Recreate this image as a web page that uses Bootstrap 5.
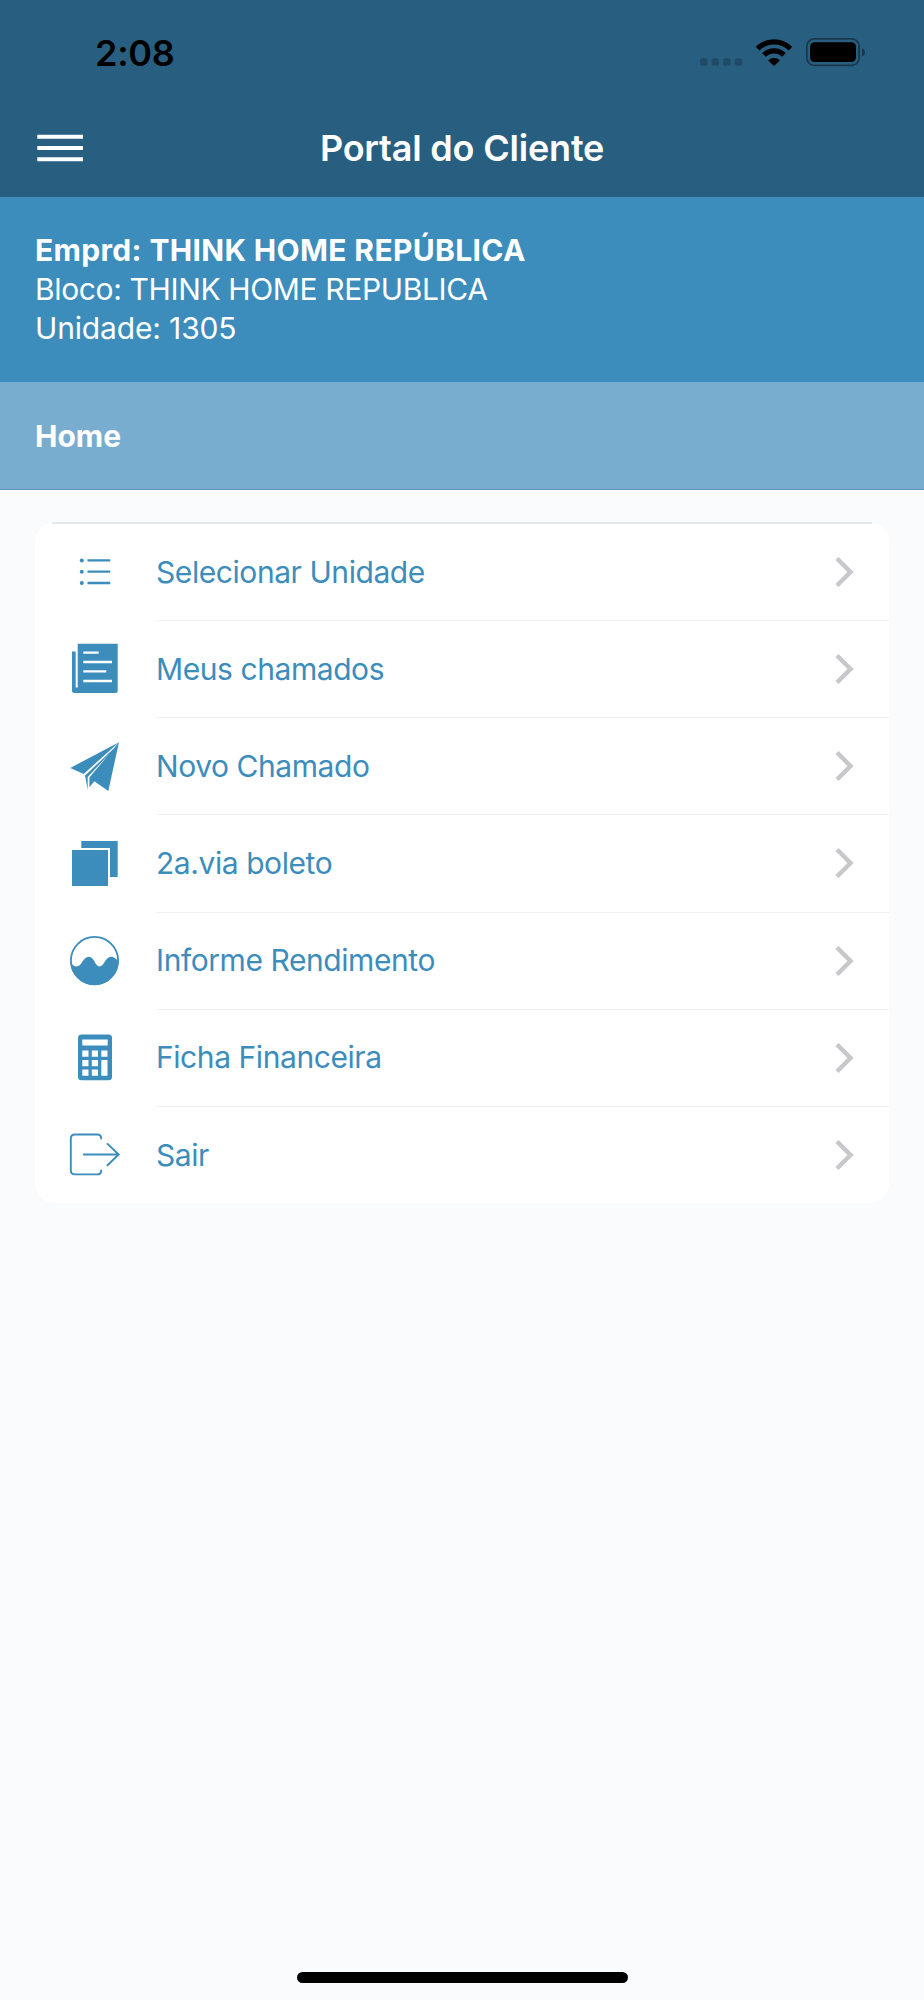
<!DOCTYPE html>
<html lang="pt-BR">
<head>
<meta charset="utf-8">
<meta name="viewport" content="width=device-width, initial-scale=1">
<title>Portal do Cliente</title>
<link href="https://cdn.jsdelivr.net/npm/bootstrap@5.3.0/dist/css/bootstrap.min.css" rel="stylesheet">
<style>
body{font-family:Inter,"Liberation Sans",sans-serif;background:#fafbfd;font-size:30px;line-height:39px;color:#fff}
svg{display:block;flex:none}
.app{height:2000px}
.app-header{background:#285f80;height:197px}
.status-bar{height:104px;padding:0 57px 0 95px}
.clock{font-size:36px;font-weight:600;color:#000;letter-spacing:-.3px;padding-top:2px}
.title-bar{height:88px;padding:0 37px}
.title-bar h1{font-size:36px;font-weight:600;letter-spacing:-.2px;padding-top:2px}
.unit-info{background:#3c8dbc;height:185px;padding:34px 35px 0}
.unit-name{letter-spacing:.34px}
.unit-block{letter-spacing:-.36px}
.unit-number{letter-spacing:-.15px}
.section-head{background:#78add0;height:108px;padding:2px 35px 0;border-bottom:1px solid #6095b7}
.menu{margin:32px 35px 0;border-radius:20px;background:#fff;overflow:hidden;width:854px}
.menu-line{height:2px;margin:0 17px;background:#e6e7e8}
.menu-row{height:97.2px;padding-left:29px;color:#3c8dbc;text-decoration:none;letter-spacing:-.43px}
.menu-line + .menu-row{height:96px}
.menu-row + .menu-row > svg{margin-top:1.6px}
.menu-text{margin-left:32px;padding-right:33px;height:100%}
.menu-row + .menu-row .menu-text{border-top:1px solid #f0f0f1}
.home-bar{width:331px;height:11px;border-radius:6px;background:#000;margin-bottom:17.500px}
</style>
</head>
<body>
<div class="app d-flex flex-column">
  <header class="app-header">
    <div class="status-bar d-flex align-items-center justify-content-between">
      <span class="clock">2:08</span>
      <svg width="169" height="32" viewBox="698 36 169 32">
        <g opacity=".2"><rect x="700" y="58.2" width="7.6" height="7.6" rx="2.6"/><rect x="711.6" y="58.2" width="7.6" height="7.6" rx="2.6"/><rect x="723" y="58.2" width="7.6" height="7.6" rx="2.6"/><rect x="734.6" y="58.2" width="7.6" height="7.6" rx="2.6"/></g>
        <g fill="none" stroke="#000" stroke-width="5.2"><path d="M757.6 48.6a23.3 23.3 0 0 1 32.8 0"/><path d="M764 55a14.2 14.2 0 0 1 20 0"/></g>
        <path d="M768.2 60.4a8.3 8.3 0 0 1 11.6 0L774 66z"/>
        <rect x="806.9" y="38.9" width="52.2" height="26.4" rx="7.4" fill="none" stroke="#000" stroke-width="1.8" opacity=".4"/>
        <rect x="810" y="42.3" width="46" height="19.7" rx="4.5"/>
        <path d="M862 48q3 1.200 3 4.200t-3 4.200z" opacity=".4"/>
      </svg>
    </div>
    <div class="title-bar d-flex align-items-center justify-content-between">
      <svg width="46" height="28" viewBox="0 0 46 28"><path d="M.3 2.700H46M.3 14H46M.3 25.300H46" stroke="#fff" stroke-width="4"/></svg>
      <h1 class="m-0">Portal do Cliente</h1>
      <svg width="46" height="28" aria-hidden="true"></svg>
    </div>
  </header>

  <section class="unit-info">
    <div class="unit-name fw-bold">Emprd: THINK HOME REPÚBLICA</div>
    <div class="unit-block">Bloco: THINK HOME REPUBLICA</div>
    <div class="unit-number">Unidade: 1305</div>
  </section>
  <div class="section-head d-flex align-items-center fw-bold">Home</div>

  <nav class="menu d-flex flex-column">
    <div class="menu-line"></div>
    <a class="menu-row d-flex align-items-center" href="#">
      <svg width="60" height="60" viewBox="0 0 60 60" fill="#3c8dbc"><circle cx="17.800" cy="18.400" r="2"/><circle cx="17.800" cy="29.700" r="2"/><circle cx="17.800" cy="41" r="2"/><path d="M23.500 18.400h22.800M23.500 29.700h22.800M23.500 41h22.800" stroke="#3c8dbc" stroke-width="2.300"/></svg>
      <span class="menu-text flex-fill d-flex align-items-center justify-content-between">Selecionar Unidade<svg width="22" height="32" viewBox="0 0 22 32"><path d="M3 2.500L16.500 16 3 29.500" fill="none" stroke="#c7c7cc" stroke-width="4.500"/></svg></span>
    </a>
    <a class="menu-row d-flex align-items-center" href="#">
      <svg width="60" height="60" viewBox="0 0 60 60" fill="#3c8dbc"><path d="M13.700 4.700h40V51.500q0 2.500-2.500 2.500H10.500Q8 54 8 51.500V12.400h3.700v36h2z"/><path d="M19.300 13.700h15.400M19.300 23H48M19.300 32.400h23M19.300 42H48" stroke="#fff" stroke-width="2.300"/></svg>
      <span class="menu-text flex-fill d-flex align-items-center justify-content-between">Meus chamados<svg width="22" height="32" viewBox="0 0 22 32"><path d="M3 2.500L16.500 16 3 29.500" fill="none" stroke="#c7c7cc" stroke-width="4.500"/></svg></span>
    </a>
    <a class="menu-row d-flex align-items-center" href="#">
      <svg width="60" height="60" viewBox="0 0 60 60" fill="#3c8dbc"><path d="M55 5.200L6.300 30.900l13.400 6zM53.500 8L21 38.500l2.700 14.400V40zM55 5.200L25.400 40.600v9.600l4.900-6 14 9.700z"/></svg>
      <span class="menu-text flex-fill d-flex align-items-center justify-content-between">Novo Chamado<svg width="22" height="32" viewBox="0 0 22 32"><path d="M3 2.500L16.500 16 3 29.500" fill="none" stroke="#c7c7cc" stroke-width="4.500"/></svg></span>
    </a>
    <a class="menu-row d-flex align-items-center" href="#">
      <svg width="60" height="60" viewBox="0 0 60 60" fill="#3c8dbc"><path d="M8 16h36v36H8zM17.300 7h36.400v36H46V14H17.300z"/></svg>
      <span class="menu-text flex-fill d-flex align-items-center justify-content-between">2a.via boleto<svg width="22" height="32" viewBox="0 0 22 32"><path d="M3 2.500L16.500 16 3 29.500" fill="none" stroke="#c7c7cc" stroke-width="4.500"/></svg></span>
    </a>
    <a class="menu-row d-flex align-items-center" href="#">
      <svg width="60" height="60" viewBox="0 0 60 60" fill="#3c8dbc"><circle cx="30.500" cy="29.500" r="23.600" fill="none" stroke="#3c8dbc" stroke-width="1.800"/><path d="M6.500 31C8 33.500 10 35.500 12.700 35.500c5 0 6.500-9.700 12-9.700s6.500 9.700 10.800 9.700c4.500 0 6-9.700 11.500-9.700 3.500 0 5 2.700 7.500 3.900a24 24 0 0 1-48 1.300z"/></svg>
      <span class="menu-text flex-fill d-flex align-items-center justify-content-between">Informe Rendimento<svg width="22" height="32" viewBox="0 0 22 32"><path d="M3 2.500L16.500 16 3 29.500" fill="none" stroke="#c7c7cc" stroke-width="4.500"/></svg></span>
    </a>
    <a class="menu-row d-flex align-items-center" href="#">
      <svg width="60" height="60" viewBox="0 0 60 60" fill="#3c8dbc"><rect x="14" y="6.600" width="34" height="45.700" rx="3.500"/><path fill="#fff" d="M18.300 11.600h25.400v5.900H18.300zM18.300 22.600h6.200v6.200h-6.200zM27.800 22.600H34v6.200h-6.200zM37.300 22.600h6.200v6.200h-6.200zM18.300 32h6.200v6.200h-6.200zM27.800 32H34v6.200h-6.200zM18.300 41.500h6.200v6.200h-6.200zM27.800 41.500H34v6.200h-6.200zM37.300 32h6.200v15.700h-6.200z"/></svg>
      <span class="menu-text flex-fill d-flex align-items-center justify-content-between">Ficha Financeira<svg width="22" height="32" viewBox="0 0 22 32"><path d="M3 2.500L16.500 16 3 29.500" fill="none" stroke="#c7c7cc" stroke-width="4.500"/></svg></span>
    </a>
    <a class="menu-row d-flex align-items-center" href="#">
      <svg width="60" height="60" viewBox="0 0 60 60" fill="none" stroke="#3c8dbc" stroke-width="1.900" stroke-linecap="round"><path d="M37.200 13.500q0-4-4-4H11q-4.200 0-4.200 4.200v31.500q0 4.200 4.200 4.200h22.200q4 0 4-4M19.800 29.500h35M43.500 18.900L54.700 29.500 43.500 40.300"/></svg>
      <span class="menu-text flex-fill d-flex align-items-center justify-content-between">Sair<svg width="22" height="32" viewBox="0 0 22 32"><path d="M3 2.500L16.500 16 3 29.500" fill="none" stroke="#c7c7cc" stroke-width="4.500"/></svg></span>
    </a>
  </nav>

  <div class="home-bar mt-auto mx-auto"></div>
</div>
<script src="https://cdn.jsdelivr.net/npm/bootstrap@5.3.0/dist/js/bootstrap.bundle.min.js"></script>
</body>
</html>
